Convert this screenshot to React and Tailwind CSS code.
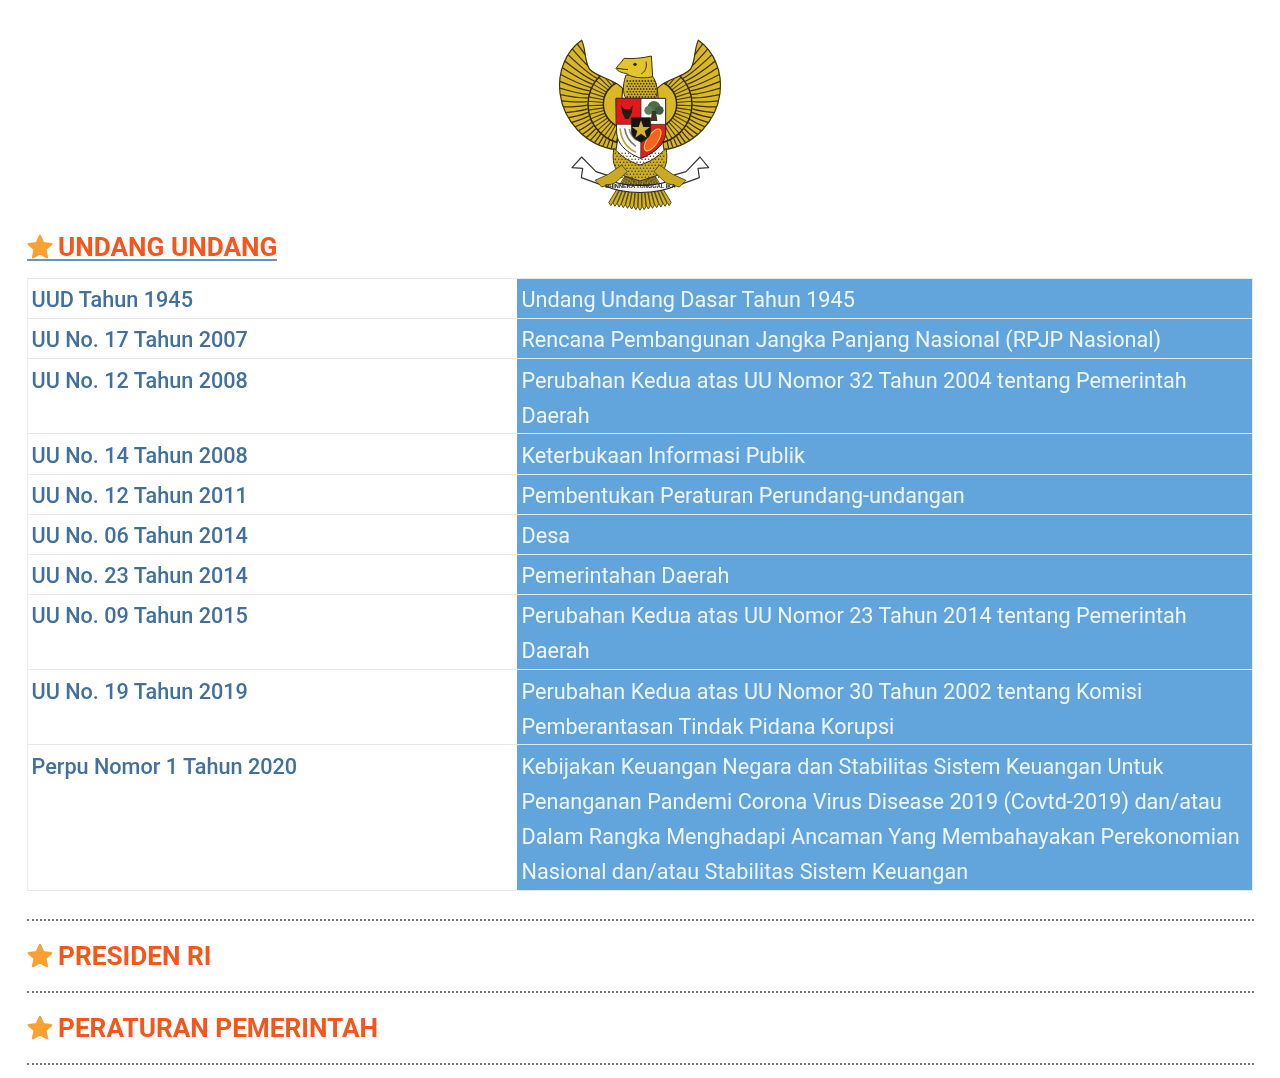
import React from "react";

const rows = [
  ["UUD Tahun 1945", "Undang Undang Dasar Tahun 1945"],
  ["UU No. 17 Tahun 2007", "Rencana Pembangunan Jangka Panjang Nasional (RPJP Nasional)"],
  ["UU No. 12 Tahun 2008", "Perubahan Kedua atas UU Nomor 32 Tahun 2004 tentang Pemerintah Daerah"],
  ["UU No. 14 Tahun 2008", "Keterbukaan Informasi Publik"],
  ["UU No. 12 Tahun 2011", "Pembentukan Peraturan Perundang-undangan"],
  ["UU No. 06 Tahun 2014", "Desa"],
  ["UU No. 23 Tahun 2014", "Pemerintahan Daerah"],
  ["UU No. 09 Tahun 2015", "Perubahan Kedua atas UU Nomor 23 Tahun 2014 tentang Pemerintah Daerah"],
  ["UU No. 19 Tahun 2019", "Perubahan Kedua atas UU Nomor 30 Tahun 2002 tentang Komisi Pemberantasan Tindak Pidana Korupsi"],
  ["Perpu Nomor 1 Tahun 2020", "Kebijakan Keuangan Negara dan Stabilitas Sistem Keuangan Untuk Penanganan Pandemi Corona Virus Disease 2019 (Covtd-2019) dan/atau Dalam Rangka Menghadapi Ancaman Yang Membahayakan Perekonomian Nasional dan/atau Stabilitas Sistem Keuangan"],
];

function Star() {
  return (
    <svg width="28" height="28" viewBox="0 0 28 28" className="shrink-0 -my-[2px] -ml-[1px] -mr-[2px]">
      <path d="M14 3l3.300 7.300 7.900.8-5.900 5.300 1.700 7.800L14 20.200l-7 4 1.700-7.800-5.900-5.300 7.900-.8z" fill="#f9a131" stroke="#f9a131" strokeWidth="2.400" strokeLinejoin="round" />
    </svg>
  );
}

const WING = "M125 46C78 78 52 140 60 205C70 285 135 362 228 374L240 300L248 190C222 160 175 160 148 132C132 102 138 72 125 46Z";

function Wing({ id }) {
  const cx = 262, cy = 238;
  const long = [];
  for (let a = 98; a <= 252; a += 5.2) {
    const r = (a * Math.PI) / 180;
    const mx = cx + 160 * Math.cos(r + 0.05);
    const my = cy - 160 * Math.sin(r + 0.05);
    long.push(
      <path key={a} d={`M${cx + 120 * Math.cos(r)} ${cy - 120 * Math.sin(r)}Q${mx} ${my} ${cx + 260 * Math.cos(r)} ${cy - 260 * Math.sin(r)}`} fill="none" stroke="#3f3106" strokeWidth="3.800" />
    );
  }
  const short = [];
  for (let a = 104; a <= 262; a += 6.5) {
    const r = (a * Math.PI) / 180;
    short.push(
      <line key={a} x1={cx + 72 * Math.cos(r)} y1={cy - 72 * Math.sin(r)} x2={cx + 118 * Math.cos(r)} y2={cy - 118 * Math.sin(r)} stroke="#4c3c08" strokeWidth="3.400" />
    );
  }
  return (
    <g>
      <clipPath id={id}>
        <path d={WING} />
      </clipPath>
      <path d={WING} fill="#d8b824" stroke="#3f3208" strokeWidth="3.500" />
      <g clipPath={`url(#${id})`}>
        {long}
        {short}
        <circle cx={cx} cy={cy} r="118" fill="none" stroke="#2f2606" strokeWidth="4.500" />
        <circle cx={cx} cy={cy} r="72" fill="none" stroke="#2f2606" strokeWidth="4.500" />
      </g>
    </g>
  );
}

function Ribbon() {
  return (
    <g>
      <path d="M125 396L96 428L128 430L124 458L190 482L205 452L168 440Z" fill="#fff" stroke="#333" strokeWidth="3.500" strokeLinejoin="round" />
      <path d="M480 396L506 428L474 430L478 458L412 482L396 452L438 440Z" fill="#fff" stroke="#333" strokeWidth="3.500" strokeLinejoin="round" />
      <path d="M190 480C250 510 350 510 412 480L404 462C350 488 250 488 198 462Z" fill="#f4f4f4" stroke="#222" strokeWidth="3.500" />
      <path d="M165 466L205 448L245 420L262 440L225 474L185 486Z" fill="#c9aa22" stroke="#4c3c08" strokeWidth="2.500" />
      <path d="M438 466L398 448L358 420L342 440L378 474L418 486Z" fill="#c9aa22" stroke="#4c3c08" strokeWidth="2.500" />
    </g>
  );
}

function Emblem() {
  const tail = [];
  for (let i = -7; i <= 7; i++) {
    tail.push(
      <path key={i} d={`M${300 + i * 4} 425L${300 + i * 12.5 - 6} ${546 - Math.abs(i) * 2}L${300 + i * 12.5} ${556 - Math.abs(i) * 2}L${300 + i * 12.5 + 6} ${546 - Math.abs(i) * 2}Z`} fill="#d2b225" stroke="#3f3208" strokeWidth="2.500" />
    );
  }
  const dots = [];
  for (let y = 168; y < 220; y += 8) {
    for (let x = 262; x < 346; x += 9) {
      dots.push(<circle key={`${x}-${y}`} cx={x + ((y - 168) % 16 ? 4 : 0)} cy={y} r="2.800" fill="#4c3c08" />);
    }
  }
  const legDots = [];
  for (let y = 385; y < 462; y += 9) {
    for (let x = 226; x < 376; x += 10) {
      legDots.push(<circle key={`${x}-${y}`} cx={x + ((y - 385) % 18 ? 5 : 0)} cy={y} r="2.200" fill="#4c3c08" />);
    }
  }
  return (
    <svg width="200" height="195" viewBox="0 0 600 585">
      <Wing id="wing-l" />
      <g transform="translate(600 0) scale(-1 1)">
        <Wing id="wing-r" />
      </g>
      {tail}
      <path d="M222 370C215 405 222 435 245 450L300 468L355 450C378 435 385 405 378 370C350 400 330 410 300 420C270 410 250 400 222 370Z" fill="#cbae24" stroke="#3f3208" strokeWidth="3" />
      {legDots}
      <path d="M258 150C245 185 250 215 262 225H345C358 200 350 170 335 150Z" fill="#d2b225" stroke="#3f3208" strokeWidth="3" />
      {dots}
      <path d="M228 130C236 118 245 112 252 100C275 102 305 100 334 93L338 155C320 160 285 160 266 150C262 142 240 148 228 130Z" fill="#e3c42c" stroke="#3f3208" strokeWidth="3" />
      <circle cx="285" cy="118" r="5" fill="#2c2206" />
      <path d="M230 130L264 134" stroke="#3f3208" strokeWidth="3" />
      <path d="M318 110C322 128 314 142 304 146" fill="none" stroke="#3f3208" strokeWidth="3" />
      <path d="M228 220H377V320C377 360 340 385 302 400C265 385 230 360 230 320Z" fill="#fff" stroke="#222" strokeWidth="3" />
      <path d="M228 220H303V298H228Z" fill="#e01a1c" stroke="#222" strokeWidth="2" />
      <path d="M243 240L252 252H270L278 240L276 262L266 282H256L246 262Z" fill="#2a1a10" />
      <path d="M303 298H377V320C377 360 340 385 302 400Z" fill="#e0201c" stroke="#222" strokeWidth="2" />
      <ellipse cx="338" cy="345" rx="16" ry="38" transform="rotate(34 338 345)" fill="#f7631e" stroke="#fbd24a" strokeWidth="3" />
      <circle cx="342" cy="248" r="20" fill="#4d6b4c" />
      <circle cx="326" cy="256" r="13" fill="#5e7c5c" />
      <circle cx="358" cy="256" r="13" fill="#3f5b3f" />
      <path d="M336 258H348L352 288H332Z" fill="#3d3326" />
      <path d="M240 310C244 345 262 370 288 382" fill="none" stroke="#b9a33a" strokeWidth="5" />
      <path d="M254 310C258 335 270 352 288 364" fill="none" stroke="#777" strokeWidth="5" />
      <path d="M268 312C270 326 278 338 290 346" fill="none" stroke="#999" strokeWidth="5" />
      <path d="M274 278H332V318C332 335 318 345 303 352C288 345 274 335 274 318Z" fill="#17150f" stroke="#222" strokeWidth="2" />
      <path d="M303 286L310 306L330 306L314 318L320 338L303 326L286 338L292 318L276 306L296 306Z" fill="#d3b52d" />
      <Ribbon />
      <text x="301" y="490" textAnchor="middle" fontSize="17" fontWeight="700" fill="#222" style={{ fontFamily: "'Liberation Sans', sans-serif" }}>BHINNEKA TUNGGAL IKA</text>
    </svg>
  );
}

function Heading({ children, underline }) {
  return (
    <h2 className={`flex items-center gap-[6px] w-fit text-[26.2px] leading-[24px] font-bold text-[#f4561d] ${underline ? "border-b-[2px] border-[#6b94bd]" : ""}`}>
      <Star />
      <span>{children}</span>
    </h2>
  );
}

function Dots() {
  return <div className="w-[1227px] border-t-[2px] border-dotted border-[#777]" />;
}

export default function App() {
  return (
    <div className="w-[1280px] h-[1078px] overflow-hidden bg-white px-[27px] font-['Roboto',sans-serif] blur-[0.45px]">
      <div className="flex justify-center pt-[25px]">
        <Emblem />
      </div>
      <div className="mt-[15px]">
        <Heading underline>UNDANG UNDANG</Heading>
      </div>
      <table className="mt-[17px] w-[1226px] table-fixed border-collapse text-[21.65px] leading-[35.05px] border border-[#ececec]">
        <colgroup>
          <col className="w-[489.500px]" />
          <col />
        </colgroup>
        <tbody>
          {rows.map(([a, b]) => (
            <tr key={a}>
              <td className="border-y border-[#e9e9e9] px-[3.500px] pt-[3.300px] pb-[0.800px] align-top font-medium text-[#41709f]">{a}</td>
              <td className="border-y border-[#dfeaf5] bg-[#62a5dc] pl-[4.500px] pr-[8px] pt-[3.300px] pb-[0.800px] align-top text-[#eef5fb]">{b}</td>
            </tr>
          ))}
        </tbody>
      </table>
      <div className="mt-[28px]">
        <Dots />
      </div>
      <div className="py-[23px]">
        <Heading>PRESIDEN RI</Heading>
      </div>
      <Dots />
      <div className="py-[23px]">
        <Heading>PERATURAN PEMERINTAH</Heading>
      </div>
      <Dots />
    </div>
  );
}
